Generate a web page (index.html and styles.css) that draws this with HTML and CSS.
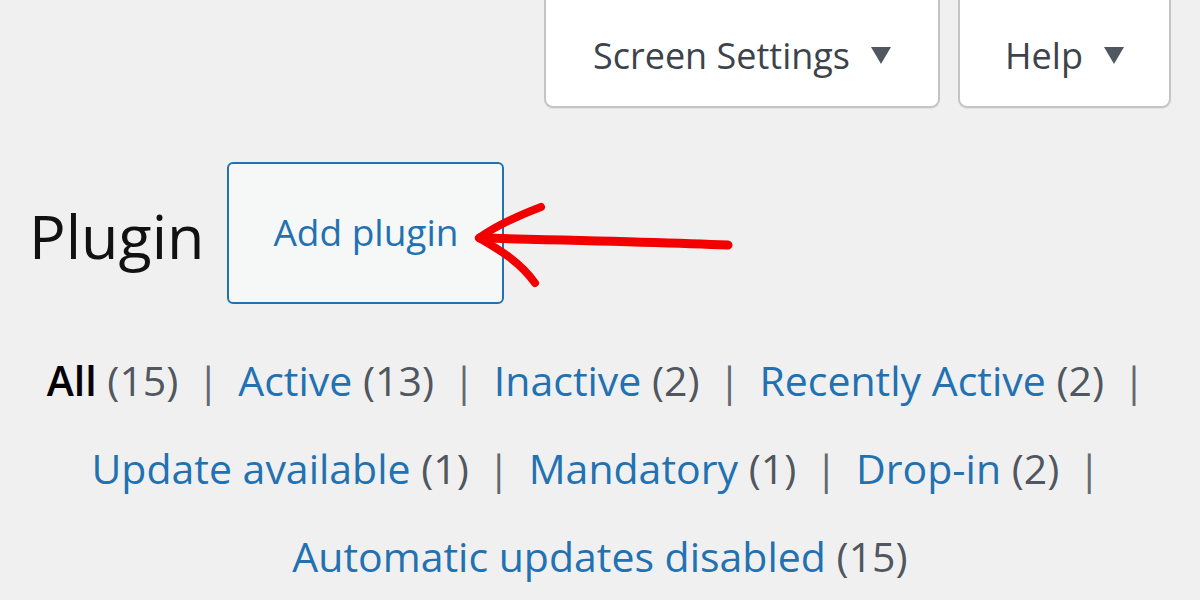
FILE: index.html
```html
<!DOCTYPE html>
<html lang="en">
<head>
<meta charset="utf-8">
<title>Plugins</title>
<link rel="stylesheet" href="styles.css">
</head>
<body>
<div class="page">
  <div class="screen-meta">
    <button class="meta-tab tab-screen">Screen Settings <svg class="caret" viewBox="0 0 20 18" width="20" height="18"><polygon points="0,0 20,0 10,17" /></svg></button>
    <button class="meta-tab tab-help">Help <svg class="caret" viewBox="0 0 20 18" width="20" height="18"><polygon points="0,0 20,0 10,17" /></svg></button>
  </div>
  <div class="title-row">
    <h1 class="page-title">Plugin</h1>
    <a class="add-btn" href="#">Add plugin</a>
  </div>
  <ul class="filters">
    <li><a class="current" href="#">All <span class="count">(15)</span></a> <span class="sep">|</span></li>
    <li><a href="#">Active <span class="count">(13)</span></a> <span class="sep">|</span></li>
    <li><a href="#">Inactive <span class="count">(2)</span></a> <span class="sep">|</span></li>
    <li><a href="#">Recently Active <span class="count">(2)</span></a> <span class="sep">|</span></li>
    <li><a href="#">Update available <span class="count">(1)</span></a> <span class="sep">|</span></li>
    <li><a href="#">Mandatory <span class="count">(1)</span></a> <span class="sep">|</span></li>
    <li><a href="#">Drop-in <span class="count">(2)</span></a> <span class="sep">|</span></li>
    <li><a href="#">Automatic updates disabled <span class="count">(15)</span></a></li>
  </ul>
  <svg class="annotation" viewBox="0 0 1200 600" width="1200" height="600">
    <path d="M728 245 C660 242 570 240 480 238" />
    <path class="barb" d="M541 207 C515 217 494 227 479 238" />
    <path class="barb" d="M479 238 C500 250 520 262 535 283" />
  </svg>
</div>
</body>
</html>
```

FILE: styles.css
```css
html, body {
  margin: 0;
  padding: 0;
  background: #f0f0f1;
}

.page {
  position: relative;
  width: 1200px;
  height: 600px;
  overflow: hidden;
  font-family: "Open Sans", "Noto Sans", sans-serif;
  color: #1d2327;
}

.screen-meta {
  display: flex;
  justify-content: flex-end;
  gap: 18px;
  padding-right: 29px;
}

.meta-tab {
  display: flex;
  align-items: center;
  justify-content: center;
  gap: 21px;
  height: 109px;
  box-sizing: border-box;
  padding: 5px 0 0 0;
  margin-top: -1px;
  background: #fff;
  border: 2px solid #c3c4c7;
  border-top: none;
  border-radius: 0 0 9px 9px;
  box-shadow: 0 1px 1px rgba(0,0,0,0.06);
  font-family: inherit;
  font-size: 36px;
  color: #3c434a;
  white-space: nowrap;
  cursor: pointer;
}

.tab-screen { width: 396px; }
.tab-help { width: 213px; }

.caret {
  flex: none;
  fill: #50575e;
  margin-top: 2px;
}

.title-row {
  display: flex;
  align-items: center;
  gap: 23px;
  margin: 54px 0 0 29px;
}

.page-title {
  margin: 0;
  font-weight: 400;
  font-size: 61px;
  color: #111;
  line-height: 1;
  padding-top: 4px;
}

.add-btn {
  display: flex;
  align-items: center;
  justify-content: center;
  width: 277px;
  height: 142px;
  box-sizing: border-box;
  border: 2px solid #2271b1;
  border-radius: 6px;
  background: #f6f7f7;
  color: #2271b1;
  font-size: 37px;
  text-decoration: none;
  padding-bottom: 4px;
}

.filters {
  list-style: none;
  margin: 32px 0 0 0;
  padding: 0 40px;
  text-align: center;
  font-size: 41px;
  line-height: 88px;
  color: #646970;
}

.filters li {
  display: inline;
}

.filters a {
  color: #2271b1;
  text-decoration: none;
}

.filters a.current {
  color: #000;
  font-weight: 600;
}

.filters .count {
  color: #50575e;
  font-weight: 400;
}

.filters .sep {
  color: #646970;
  padding: 0 8px;
}

.annotation {
  position: absolute;
  left: 0;
  top: 0;
  pointer-events: none;
  fill: none;
  stroke: #f20000;
  stroke-width: 9;
  stroke-linecap: round;
  stroke-linejoin: round;
}

.annotation .barb {
  stroke-width: 8;
}
```
